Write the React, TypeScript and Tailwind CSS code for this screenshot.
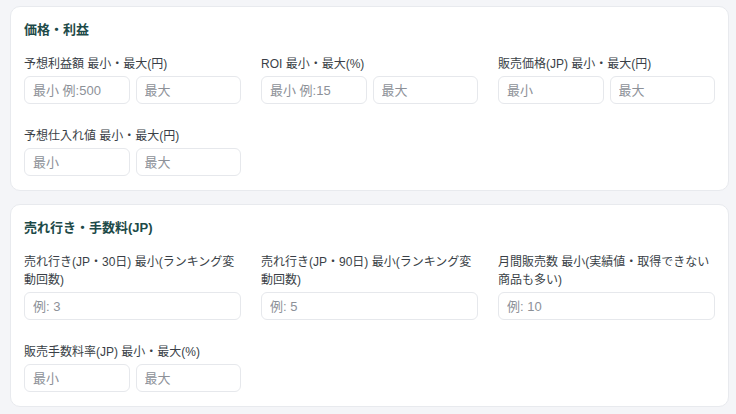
const font = { fontFamily: '"Liberation Sans", "Noto Sans CJK JP", sans-serif' };

type Field =
  | { label: string; kind: "range"; min: string; max: string }
  | { label: string; kind: "single"; placeholder: string };

const sections: { title: string; fields: Field[] }[] = [
  {
    title: "価格・利益",
    fields: [
      { label: "予想利益額 最小・最大(円)", kind: "range", min: "最小 例:500", max: "最大" },
      { label: "ROI 最小・最大(%)", kind: "range", min: "最小 例:15", max: "最大" },
      { label: "販売価格(JP) 最小・最大(円)", kind: "range", min: "最小", max: "最大" },
      { label: "予想仕入れ値 最小・最大(円)", kind: "range", min: "最小", max: "最大" },
    ],
  },
  {
    title: "売れ行き・手数料(JP)",
    fields: [
      { label: "売れ行き(JP・30日) 最小(ランキング変動回数)", kind: "single", placeholder: "例: 3" },
      { label: "売れ行き(JP・90日) 最小(ランキング変動回数)", kind: "single", placeholder: "例: 5" },
      { label: "月間販売数 最小(実績値・取得できない商品も多い)", kind: "single", placeholder: "例: 10" },
      { label: "販売手数料率(JP) 最小・最大(%)", kind: "range", min: "最小", max: "最大" },
    ],
  },
];

function Input({ placeholder }: { placeholder: string }) {
  return (
    <input
      type="text"
      placeholder={placeholder}
      style={font}
      className="h-[28px] w-full min-w-0 rounded-[6px] border border-[#e6e8ec] bg-white px-[8px] text-[13px] text-[#1f2937] placeholder-[#8d9198] focus:outline-none"
    />
  );
}

export default function App() {
  return (
    <div style={font} className="min-h-[414px] bg-[#f4f5f8] pl-[10px] pr-[7px] pt-[6px]">
      <div className="flex flex-col gap-[13px]">
        {sections.map((s) => (
          <section key={s.title} className="rounded-[10px] border border-[#e8eaee] bg-white px-[13px] pt-[13px] pb-[14px]">
            <h2 className="mb-[15px] text-[13px] font-bold leading-[20px] text-[#1d4a48]">{s.title}</h2>
            <div className="grid grid-cols-3 gap-x-[20px] gap-y-[23px]">
              {s.fields.map((f) => (
                <div key={f.label}>
                  <label className="mb-[3px] block text-[12px] leading-[18px] text-[#3a3f47]">{f.label}</label>
                  {f.kind === "range" ? (
                    <div className="flex gap-[6px]">
                      <Input placeholder={f.min} />
                      <Input placeholder={f.max} />
                    </div>
                  ) : (
                    <Input placeholder={f.placeholder} />
                  )}
                </div>
              ))}
            </div>
          </section>
        ))}
      </div>
    </div>
  );
}
